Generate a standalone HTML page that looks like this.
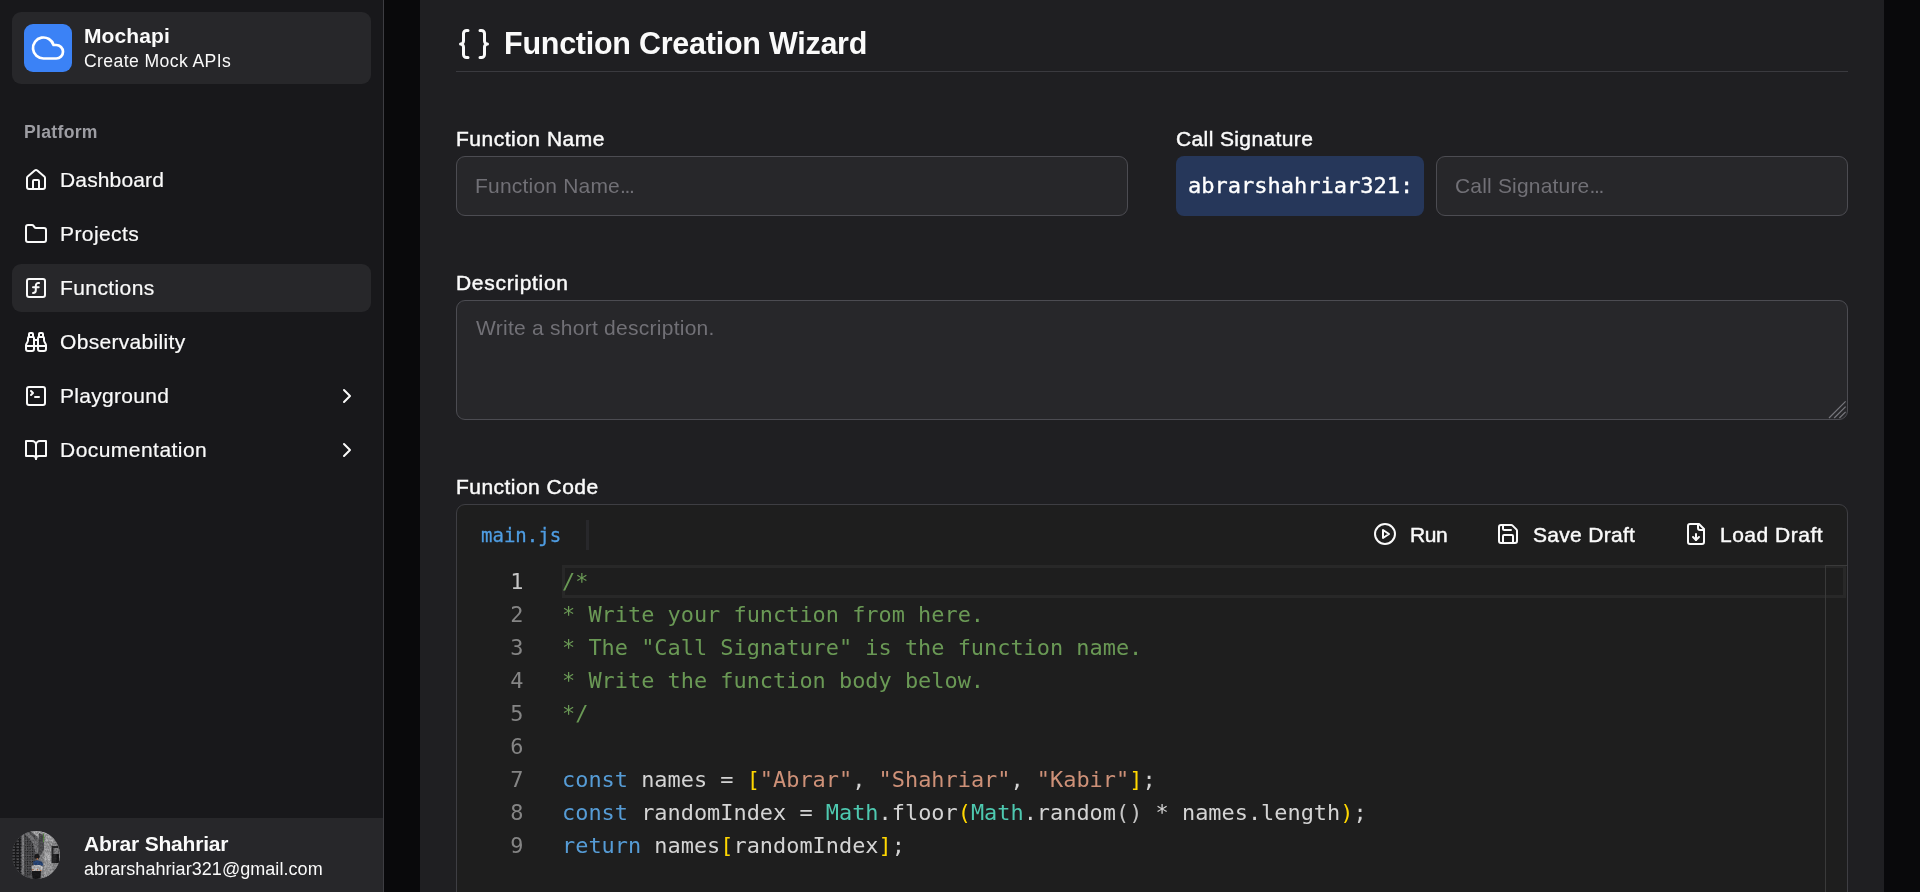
<!DOCTYPE html>
<html lang="en">
<head>
<meta charset="utf-8">
<title>Mochapi - Function Creation Wizard</title>
<style>
*{box-sizing:border-box;margin:0;padding:0}
html,body{width:1920px;height:892px;overflow:hidden;background:#09090b}
body{position:relative;font-family:"Liberation Sans",Arial,sans-serif;color:#fafafa}
.abs{position:absolute}
.t{position:absolute;white-space:pre;line-height:1}
.t,.lbl,.ln,.code{will-change:transform}
svg.ic{position:absolute;fill:none;stroke:#fafafa;stroke-width:2;stroke-linecap:round;stroke-linejoin:round;overflow:visible}
/* sidebar */
#sidebar{position:absolute;left:0;top:0;width:384px;height:892px;background:#18181b;border-right:1px solid #3d3d42}
#brand{position:absolute;left:12px;top:12px;width:359px;height:72px;background:#27272a;border-radius:9px}
#logo{position:absolute;left:24px;top:24px;width:48px;height:48px;background:#3b82f6;border-radius:9px}
.nav{position:absolute;left:12px;width:359px;height:48px;border-radius:9px}
.nav.active{background:#27272a}
.nav .lbl{position:absolute;left:48px;top:12px;-webkit-text-stroke:0.2px #fafafa;font-size:21px;line-height:24px;white-space:pre}
.nav svg.ic{left:12px;top:11.500px;width:24px;height:24px}
.nav svg.chev{left:323px;top:11.500px;width:24px;height:24px}
#footer{position:absolute;left:0;top:818px;width:383px;height:74px;background:#27272a}
#avatar{position:absolute;left:12px;top:13px;width:48px;height:48px;border-radius:50%;overflow:hidden;background:#5d5d5f}
/* main */
#main{position:absolute;left:420px;top:0;width:1464px;height:892px;background:#1f1f22}
.label{font-size:21px;-webkit-text-stroke:0.45px #fafafa}
.field{position:absolute;background:#27272a;border:1px solid #4c4c52;border-radius:9px}
.ph{color:#717076;font-size:21px}
.mono{font-family:"DejaVu Sans Mono","Liberation Mono",monospace}
#editor{position:absolute;left:36px;top:504px;width:1392px;height:420px;background:#1e1e1e;border:1px solid #3e3e43;border-radius:9px;overflow:hidden}
.btn{font-size:21px;-webkit-text-stroke:0.45px #fafafa}
.ln{position:absolute;left:0;width:66.400px;text-align:right;font-size:21.92px;line-height:33px;color:#858585;white-space:pre}
.code{position:absolute;left:105.300px;font-size:21.92px;line-height:33px;color:#d4d4d4;white-space:pre}
.c{color:#6a9955}.k{color:#569cd6}.s{color:#ce9178}.y{color:#ffd700}.m{color:#4ec9b0}.p{color:#c4c4c4}
</style>
</head>
<body>

<!-- ============ SIDEBAR ============ -->
<div id="sidebar">
  <div id="brand"></div>
  <div id="logo">
    <svg class="ic" style="left:6px;top:6px;width:36px;height:36px;stroke:#fff;stroke-width:1.8" viewBox="0 0 24 24"><path d="M17.5 19H9a7 7 0 1 1 6.71-9h1.79a4.5 4.5 0 1 1 0 9Z"/></svg>
  </div>
  <div class="t" id="t-brand" style="left:84px;top:24.500px;font-size:21px;font-weight:700;letter-spacing:0.1px">Mochapi</div>
  <div class="t" id="t-sub" style="left:84px;top:53px;font-size:17.6px;letter-spacing:0.4px">Create Mock APIs</div>

  <div class="t" id="t-platform" style="left:24px;top:124.300px;font-size:17.6px;color:#9d9da3;font-weight:700;letter-spacing:0.3px">Platform</div>

  <div class="nav" style="top:156px">
    <svg class="ic" viewBox="0 0 24 24"><path d="M15 21v-8a1 1 0 0 0-1-1h-4a1 1 0 0 0-1 1v8"/><path d="M3 10a2 2 0 0 1 .709-1.528l7-5.999a2 2 0 0 1 2.582 0l7 5.999A2 2 0 0 1 21 10v9a2 2 0 0 1-2 2H5a2 2 0 0 1-2-2z"/></svg>
    <span class="lbl" style="letter-spacing:0.15px">Dashboard</span>
  </div>
  <div class="nav" style="top:210px">
    <svg class="ic" viewBox="0 0 24 24"><path d="M20 20a2 2 0 0 0 2-2V8a2 2 0 0 0-2-2h-7.9a2 2 0 0 1-1.69-.9L9.6 3.9A2 2 0 0 0 7.93 3H4a2 2 0 0 0-2 2v13a2 2 0 0 0 2 2Z"/></svg>
    <span class="lbl" style="letter-spacing:0.4px">Projects</span>
  </div>
  <div class="nav active" style="top:264px">
    <svg class="ic" viewBox="0 0 24 24"><rect width="18" height="18" x="3" y="3" rx="2" ry="2"/><path d="M9 17c2 0 2.800-1 2.800-2.800V10c0-2 1-3.300 3.200-3"/><path d="M9 11.200h5.700"/></svg>
    <span class="lbl" style="letter-spacing:0.4px">Functions</span>
  </div>
  <div class="nav" style="top:318px">
    <svg class="ic" viewBox="0 0 24 24"><path d="M10 10h4"/><path d="M19 7V4a1 1 0 0 0-1-1h-2a1 1 0 0 0-1 1v3"/><path d="M20 21a2 2 0 0 0 2-2v-3.851c0-1.390-2-2.962-2-4.829V8a1 1 0 0 0-1-1h-4a1 1 0 0 0-1 1v11a2 2 0 0 0 2 2z"/><path d="M22 16H2"/><path d="M4 21a2 2 0 0 1-2-2v-3.851c0-1.390 2-2.962 2-4.829V8a1 1 0 0 1 1-1h4a1 1 0 0 1 1 1v11a2 2 0 0 1-2 2z"/><path d="M9 7V4a1 1 0 0 0-1-1H6a1 1 0 0 0-1 1v3"/></svg>
    <span class="lbl" style="letter-spacing:0.32px">Observability</span>
  </div>
  <div class="nav" style="top:372px">
    <svg class="ic" viewBox="0 0 24 24"><path d="m7 11 2-2-2-2"/><path d="M11 13h4"/><rect width="18" height="18" x="3" y="3" rx="2" ry="2"/></svg>
    <span class="lbl" style="letter-spacing:0.3px">Playground</span>
    <svg class="ic chev" viewBox="0 0 24 24"><path d="m9 18 6-6-6-6"/></svg>
  </div>
  <div class="nav" style="top:426px">
    <svg class="ic" viewBox="0 0 24 24"><path d="M2 3h6a4 4 0 0 1 4 4v14a3 3 0 0 0-3-3H2z"/><path d="M22 3h-6a4 4 0 0 0-4 4v14a3 3 0 0 1 3-3h7z"/></svg>
    <span class="lbl" style="letter-spacing:0.46px">Documentation</span>
    <svg class="ic chev" viewBox="0 0 24 24"><path d="m9 18 6-6-6-6"/></svg>
  </div>

  <div id="footer">
    <div id="avatar">
      <svg width="48" height="48" viewBox="0 0 48 48" style="display:block">
        <defs>
          <linearGradient id="avg" x1="0" y1="0" x2="1" y2="0">
            <stop offset="0" stop-color="#2c2c2e"/><stop offset="0.22" stop-color="#47474a"/><stop offset="0.5" stop-color="#6a6a6d"/><stop offset="0.68" stop-color="#a4a4a6"/><stop offset="1" stop-color="#8e8e90"/>
          </linearGradient>
          <filter id="avn" x="0" y="0" width="100%" height="100%">
            <feTurbulence type="fractalNoise" baseFrequency="0.55" numOctaves="2" seed="7" result="n"/>
            <feColorMatrix in="n" type="matrix" values="0 0 0 0 0  0 0 0 0 0  0 0 0 0 0  1.6 0 0 0 -0.45"/>
          </filter>
          <pattern id="avb" width="4" height="3" patternUnits="userSpaceOnUse"><rect width="4" height="3" fill="#1d1d1f"/><rect x="0.500" y="0.500" width="2.400" height="1.200" fill="#6d6d70"/></pattern>
          <pattern id="avl" width="2.500" height="2.500" patternUnits="userSpaceOnUse"><rect width="2.500" height="2.500" fill="#59595c"/><rect width="1.200" height="1.200" fill="#1f1f21"/></pattern>
        </defs>
        <rect width="48" height="48" fill="url(#avg)"/>
        <rect x="0" y="6" width="10" height="36" fill="url(#avb)"/>
        <rect x="13" y="4" width="10" height="40" fill="url(#avl)"/>
        <rect x="9.500" y="2" width="2.600" height="44" fill="#88888b"/>
        <path d="M14 0C22 4 26 12 27 24L24 24C22 13 19 7 12 3Z" fill="#7e7e81"/>
        <path d="M18 0h20l6 8-6 6H30l-4-8z" fill="#b4b4b6"/>
        <path d="M27 2l5 2 1 12-4 8h-3z" fill="#555558"/>
        <rect x="32" y="10" width="8" height="36" fill="#a9a9ab"/>
        <rect x="33" y="23" width="5" height="7" fill="#c4c4c6"/>
        <rect x="39.500" y="15" width="7" height="17" fill="#2a2a2c"/>
        <rect x="41.500" y="17" width="5" height="6" fill="#8c8c8e"/>
        <rect x="44.500" y="23" width="2.500" height="9" fill="#19191b"/>
        <path d="M31 2l1 1-0.500 2 1 1.500-1 2 0.500 2-1 1z" fill="#5c9a43"/>
        <ellipse cx="25" cy="25.500" rx="2.600" ry="2.800" fill="#1e1e20"/>
        <circle cx="25.300" cy="27.800" r="0.900" fill="#d9895b"/>
        <path d="M21 30.500l4-1.200 5 1.500 1.500 3.500-3 1H22z" fill="#2b4c82"/>
        <path d="M19.500 35l3-1h6l2.500 2-1 4H20z" fill="#c9c9cb"/>
        <circle cx="20.800" cy="38.800" r="0.800" fill="#d9895b"/><circle cx="25.500" cy="38.800" r="0.800" fill="#d9895b"/><circle cx="28.800" cy="39.500" r="0.800" fill="#d9895b"/>
        <path d="M20 40h9l-0.500 8H20.500z" fill="#1b1b1d"/>
        <rect width="48" height="48" fill="#111" filter="url(#avn)" opacity="0.4"/>
      </svg>
    </div>
    <div class="t" id="t-name" style="left:84px;top:15px;font-size:21px;font-weight:700;letter-spacing:-0.2px">Abrar Shahriar</div>
    <div class="t" id="t-mail" style="left:84px;top:42px;font-size:18px;letter-spacing:0.05px">abrarshahriar321@gmail.com</div>
  </div>
</div>

<!-- ============ MAIN ============ -->
<div id="main">
  <svg class="ic" style="left:36px;top:25.5px;width:36px;height:36px" viewBox="0 0 24 24"><path d="M8 3H7a2 2 0 0 0-2 2v5a2 2 0 0 1-2 2 2 2 0 0 1 2 2v5c0 1.100.900 2 2 2h1"/><path d="M16 21h1a2 2 0 0 0 2-2v-5c0-1.100.900-2 2-2a2 2 0 0 1-2-2V5a2 2 0 0 0-2-2h-1"/></svg>
  <div class="t" id="t-title" style="left:84px;top:28.400px;font-size:30.500px;font-weight:700;letter-spacing:-0.25px">Function Creation Wizard</div>
  <div class="abs" style="left:36px;top:71px;width:1392px;height:1px;background:#3a3a3f"></div>

  <div class="t label" id="t-l1" style="left:36px;top:128px;letter-spacing:0.5px">Function Name</div>
  <div class="field" style="left:36px;top:156px;width:672px;height:60px">
    <div class="t ph" style="left:18.300px;top:18px;letter-spacing:0.2px">Function Name<span style="letter-spacing:-1.3px">...</span></div>
  </div>

  <div class="t label" id="t-l2" style="left:756px;top:128px;letter-spacing:0.38px">Call Signature</div>
  <div class="abs" style="left:756px;top:156px;width:248px;height:60px;background:#26375a;border-radius:8px">
    <div class="t mono" id="t-badge" style="left:12px;top:19px;font-size:22px;color:#fff;-webkit-text-stroke:0.35px #fff">abrarshahriar321:</div>
  </div>
  <div class="field" style="left:1016px;top:156px;width:412px;height:60px">
    <div class="t ph" style="left:18px;top:18px;letter-spacing:0.18px">Call Signature<span style="letter-spacing:-1.3px">...</span></div>
  </div>

  <div class="t label" id="t-l3" style="left:36px;top:272px;letter-spacing:0.7px">Description</div>
  <div class="field" style="left:36px;top:300px;width:1392px;height:120px">
    <div class="t ph" style="left:19px;top:16px;letter-spacing:0.26px">Write a short description.</div>
    <svg class="abs" style="right:0;bottom:0;width:20px;height:20px" viewBox="0 0 20 20" fill="none" stroke="#77777d" stroke-width="1.2"><path d="M2 19L18.600 2.400M7.200 19L18.600 7.600M12.400 19L18.600 12.800"/></svg>
  </div>

  <div class="t label" id="t-l4" style="left:36px;top:476px;letter-spacing:0.46px">Function Code</div>
  <div id="editor">
    <div class="t mono" id="t-file" style="left:24px;top:21px;font-size:19px;color:#4f9de2;-webkit-text-stroke:0.3px #4f9de2">main.js</div>
    <div class="abs" style="left:129px;top:15px;width:3px;height:30px;background:#28282b"></div>

    <svg class="ic" style="left:916px;top:17px;width:24px;height:24px" viewBox="0 0 24 24"><circle cx="12" cy="12" r="10"/><polygon points="10 8 16 12 10 16 10 8"/></svg>
    <div class="t btn" id="t-run" style="left:953px;top:18.500px;letter-spacing:-0.4px">Run</div>
    <svg class="ic" style="left:1039px;top:17px;width:24px;height:24px" viewBox="0 0 24 24"><path d="M15.200 3a2 2 0 0 1 1.400.600l3.800 3.800a2 2 0 0 1 .600 1.400V19a2 2 0 0 1-2 2H5a2 2 0 0 1-2-2V5a2 2 0 0 1 2-2z"/><path d="M17 21v-7a1 1 0 0 0-1-1H8a1 1 0 0 0-1 1v7"/><path d="M7 3v4a1 1 0 0 0 1 1h7"/></svg>
    <div class="t btn" id="t-save" style="left:1076px;top:18.500px;letter-spacing:0.3px">Save Draft</div>
    <svg class="ic" style="left:1227px;top:17px;width:24px;height:24px" viewBox="0 0 24 24"><path d="M15 2H6a2 2 0 0 0-2 2v16a2 2 0 0 0 2 2h12a2 2 0 0 0 2-2V7Z"/><path d="M14 2v4a2 2 0 0 0 2 2h4"/><path d="M12 18v-6"/><path d="m9 15 3 3 3-3"/></svg>
    <div class="t btn" id="t-load" style="left:1263px;top:18.500px;letter-spacing:0.5px">Load Draft</div>

    <!-- monaco -->
    <div class="abs" style="left:105px;top:60px;width:1284px;height:33px;border:3px solid #282828"></div>
    <div class="abs" style="left:1368px;top:60px;width:1px;height:400px;background:#3a3a3a"></div>
    <div class="abs" style="left:1368px;top:60px;width:22px;height:1px;background:#3a3a3a"></div>

    <div class="ln mono" style="top:60px;color:#c6c6c6">1</div>
    <div class="ln mono" style="top:93px">2</div>
    <div class="ln mono" style="top:126px">3</div>
    <div class="ln mono" style="top:159px">4</div>
    <div class="ln mono" style="top:192px">5</div>
    <div class="ln mono" style="top:225px">6</div>
    <div class="ln mono" style="top:258px">7</div>
    <div class="ln mono" style="top:291px">8</div>
    <div class="ln mono" style="top:324px">9</div>

    <div class="code mono c" style="top:60px">/*</div>
    <div class="code mono c" style="top:93px">* Write your function from here.</div>
    <div class="code mono c" style="top:126px">* The "Call Signature" is the function name.</div>
    <div class="code mono c" style="top:159px">* Write the function body below.</div>
    <div class="code mono c" style="top:192px">*/</div>
    <div class="code mono" style="top:258px"><span class="k">const</span> names = <span class="y">[</span><span class="s">"Abrar"</span>, <span class="s">"Shahriar"</span>, <span class="s">"Kabir"</span><span class="y">]</span>;</div>
    <div class="code mono" style="top:291px"><span class="k">const</span> randomIndex = <span class="m">Math</span>.floor<span class="y">(</span><span class="m">Math</span>.random<span class="p">()</span> * names.length<span class="y">)</span>;</div>
    <div class="code mono" style="top:324px"><span class="k">return</span> names<span class="y">[</span>randomIndex<span class="y">]</span>;</div>
  </div>
</div>

</body>
</html>
